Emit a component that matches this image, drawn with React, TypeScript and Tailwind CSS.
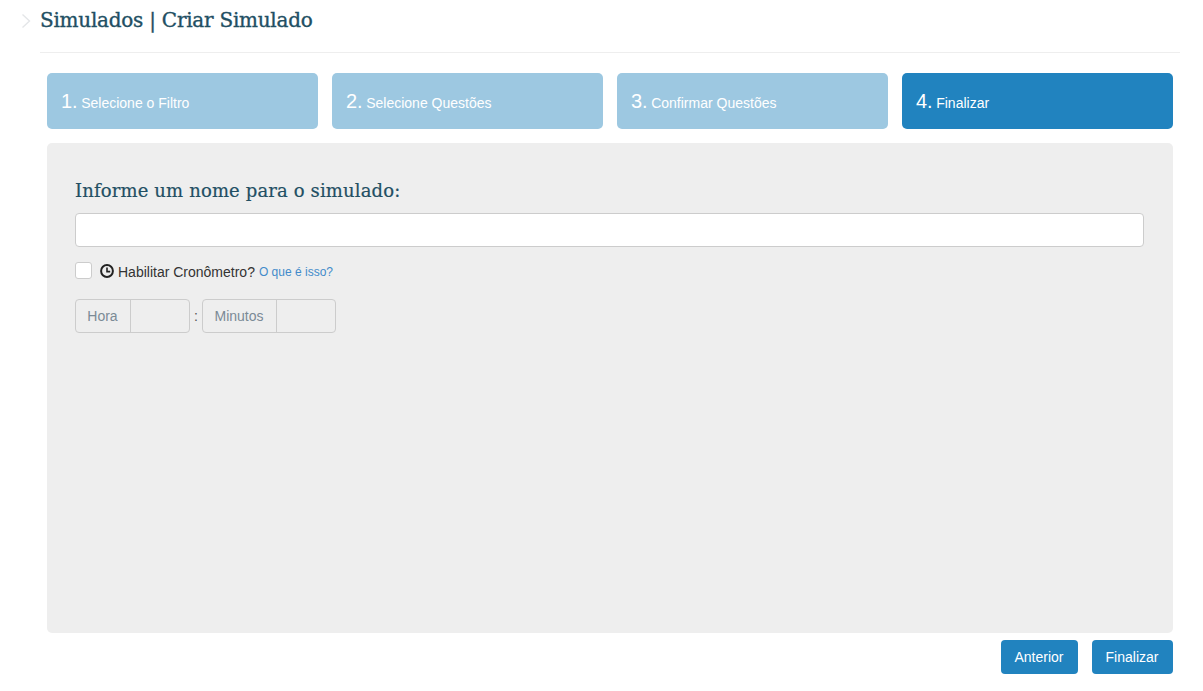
import React from "react";

const steps = [
  { n: "1.", t: "Selecione o Filtro", active: false },
  { n: "2.", t: "Selecione Questões", active: false },
  { n: "3.", t: "Confirmar Questões", active: false },
  { n: "4.", t: "Finalizar", active: true },
];

const slab = "font-['DejaVu_Serif','Liberation_Serif',serif]";

function TimeGroup({ label, labelW, inputW }: { label: string; labelW: string; inputW: string }) {
  return (
    <div className="flex h-[34px] rounded-[4px] border border-[#cccccc] bg-[#eeeeee]">
      <span className={`flex items-center justify-center border-r border-[#cccccc] pr-[1px] text-[14px] text-[#7b8a96] ${labelW}`}>{label}</span>
      <span className={`block ${inputW}`} />
    </div>
  );
}

export default function App() {
  return (
    <div className="h-[691px] w-[1203px] overflow-hidden bg-white font-['Liberation_Sans',Arial,sans-serif] text-[14px] text-[#333333]">
      <div className="flex pl-[21px]">
        <svg width="10" height="16" viewBox="0 0 10 16" className="mt-[13px]" fill="none">
          <path d="M1.5 1.5 8.5 8 1.5 14.5" stroke="#e4e6e8" strokeWidth="1.4" />
        </svg>
        <div className="ml-[9px] h-[53px] w-[1140px] border-b border-[#eeeeee]">
          <h1 className={`${slab} pt-[7px] text-[20px] leading-[27px] font-normal tracking-[-0.25px] text-[#224f63] [-webkit-text-stroke:0.35px_#224f63]`}>Simulados | Criar Simulado</h1>
        </div>
      </div>

      <div className="ml-[47px] w-[1126px]">
        <div className="mt-[20px] grid grid-cols-4 gap-[14px]">
          {steps.map((s) => (
            <div
              key={s.n}
              className={`flex h-[56px] items-baseline rounded-[5px] pl-[14px] pt-[15px] text-white ${s.active ? "bg-[#2183bf]" : "bg-[#9dc8e1]"}`}
            >
              <span className="text-[20px] leading-[26px]">{s.n}</span>
              <span className="ml-[3.5px] text-[14px]">{s.t}</span>
            </div>
          ))}
        </div>

        <div className="mt-[14px] h-[490px] rounded-[5px] bg-[#eeeeee] px-[28px] pt-[35px]">
          <h2 className={`${slab} text-[18px] leading-[26px] font-normal tracking-[0.14px] text-[#224f63] [-webkit-text-stroke:0.2px_#224f63]`}>Informe um nome para o simulado:</h2>
          <input type="text" className="mt-[9px] block h-[34px] w-[1069px] rounded-[4px] border border-[#cccccc] bg-white outline-none" />

          <div className="mt-[15px] flex h-[17px] items-center">
            <span className="block h-[17px] w-[17px] rounded-[3px] border border-[#cccccc] bg-white" />
            <svg width="14" height="14" viewBox="0 0 14 14" fill="none" className="ml-[8px]">
              <circle cx="7" cy="7" r="5.9" stroke="#222222" strokeWidth="2" />
              <path d="M7 3.4V7.6H10.2" stroke="#222222" strokeWidth="1.6" />
            </svg>
            <span className="ml-[4px] pt-[3px] text-[14px] text-[#333333]">Habilitar Cronômetro?</span>
            <a className="ml-[4px] pt-[3px] text-[12px] text-[#428bca]">O que é isso?</a>
          </div>

          <div className="mt-[20px] flex items-center">
            <TimeGroup label="Hora" labelW="w-[55px]" inputW="w-[58px]" />
            <span className="flex w-[12px] justify-center text-[14px] text-[#555555]">:</span>
            <TimeGroup label="Minutos" labelW="w-[74px]" inputW="w-[58px]" />
          </div>
        </div>

        <div className="mt-[7px] flex justify-end gap-[14px]">
          <button className="h-[34px] w-[77px] rounded-[4px] bg-[#2183bf] pr-[1px] text-[14px] text-white">Anterior</button>
          <button className="h-[34px] w-[81px] rounded-[4px] bg-[#2183bf] pr-[1px] text-[14px] text-white">Finalizar</button>
        </div>
      </div>
    </div>
  );
}
